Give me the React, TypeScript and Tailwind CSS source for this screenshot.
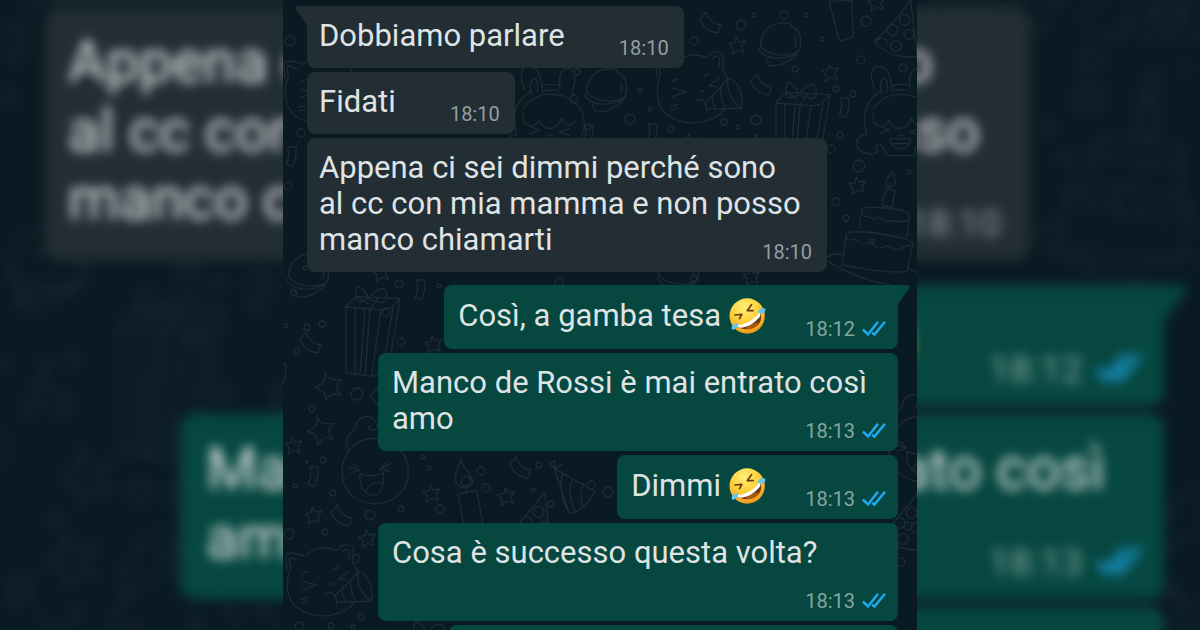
import clsx from 'clsx';

type Message = {
  id: number;
  from: 'them' | 'me';
  text: string;
  time: string;
  laugh?: boolean;
  tail?: boolean;
};

const messages: Message[] = [
  { id: 1, from: 'them', text: 'Dobbiamo parlare', time: '18:10', tail: true },
  { id: 2, from: 'them', text: 'Fidati', time: '18:10' },
  { id: 3, from: 'them', text: 'Appena ci sei dimmi perché sono al cc con mia mamma e non posso manco chiamarti', time: '18:10' },
  { id: 4, from: 'me', text: 'Così, a gamba tesa', time: '18:12', laugh: true, tail: true },
  { id: 5, from: 'me', text: 'Manco de Rossi è mai entrato così amo', time: '18:13' },
  { id: 6, from: 'me', text: 'Dimmi', time: '18:13', laugh: true },
  { id: 7, from: 'me', text: 'Cosa è successo questa volta?', time: '18:13' },
];

/* Wallpaper doodles, each drawn on a 3x grid */

const shapes = {
  cat: 'M10 82C5 55 3 35 12 32C25 28 50 35 65 40M20 75C14 55 15 45 22 45L42 52M65 40C90 12 120 10 160 22C170 5 195 2 205 10C212 25 208 40 205 55L220 85M175 25C185 15 195 18 197 28L195 50M20 75C5 110 8 150 22 175C50 215 110 225 150 215C180 208 200 195 210 180M55 115L98 125L55 140M195 85L165 108L188 110M55 95q10-10 20-8M150 78q12-2 16-8M138 123h10M50 170l20-7M52 180l20-6M150 162L225 85C250 90 270 130 262 175L158 178M225 85C215 100 225 150 262 175M200 110C198 130 205 160 215 176M175 135C172 150 180 165 185 176M128 150C145 145 160 155 158 188',
  gift: 'M3 60V258L80 268L108 68ZM3 58L35 28L165 35L135 65L108 68M165 38L130 250L80 268M30 62V260M60 66L45 263M75 66L60 265M145 58L112 256M70 30C50-5 35-5 35 5C30 25 35 45 45 45L70 35ZM75 30C95 5 115 0 122 12C128 30 125 45 110 48L75 38M35 28L70 50M100 32L75 66',
  cake: 'M198 5C178 25 170 45 185 50C208 50 210 30 198 5M190 40L186 58M178 57L165 105L195 112L205 62ZM97 170L105 118C110 105 240 115 248 135L240 200M105 130C115 150 125 130 140 150C155 130 165 155 180 155C200 145 215 165 245 150M45 285L58 195C60 170 250 200 258 220L240 305C180 310 90 295 45 285M55 200C65 225 75 195 95 215C110 235 125 205 140 225C160 250 175 215 195 235C215 250 230 225 255 225M0 262C10 252 30 250 45 256M5 275C60 310 150 345 230 350M245 295L290 320',
  bunny: 'M60 75C40 30 50 0 75 5C105 8 110 50 112 82M80 85C70 55 80 40 92 42C100 50 98 70 97 80M165 70C160 30 170 10 190 10C215 15 215 45 200 85M113 62C130 57 150 57 165 62M115 78C130 74 150 74 163 78M55 130C90 75 180 75 220 125M35 205C20 150 30 110 75 80M55 145C50 190 90 195 102 165C115 200 155 200 170 160C180 185 200 185 215 165M65 180l38 15l-30 12M195 190l-30 12l30 10M105 222h62C165 262 110 262 105 222M108 236h56M130 213q8-8 15 0M35 210C0 210-5 250 20 260C40 270 60 270 70 260C50 235 80 220 95 272H180C175 240 200 235 210 260M225 130C245 160 240 200 225 225',
  bell: 'M95 5C40-5 5 25 5 70C20 100 90 110 122 85C130 50 120 15 97 15ZM5 75C-5 80 5 95 25 103C60 117 120 100 120 82M22 108L30 130C60 138 90 120 115 97M108 45q6 15 0 30',
  star: 'M22 0L30 15L50 12L38 28L46 46L26 40L10 52L12 32L0 20L18 17Z',
  bigStar: 'M30 0C38 22 44 26 80 22C60 42 60 46 78 70C55 62 48 64 32 86C32 62 26 54 0 46C24 38 32 30 30 0Z',
  streamer: 'M18 0C10 10 5 18 0 22C8 45 35 65 55 62L62 38C45 38 25 25 18 0Z',
  ribbon: 'M5 0H30C32 20 28 40 20 58L0 52C8 38 10 18 5 0Z',
  laugh: 'M102 65C50 60 3 105 3 165C3 225 50 260 102 260C160 260 202 220 202 165C202 110 160 70 102 65M22 100C5 70 25 50 42 35C48 0 75-10 95 5C115 20 110 42 95 40C85 38 80 30 88 25M25 150l30 10l-25 8M35 140l20 18M150 140l-35 18l30 5M140 132l-20 22M57 170C80 180 105 178 127 168C132 215 115 235 92 235C70 230 55 215 57 170M75 225C75 205 110 190 122 200',
  candle: 'M20 0C10 25-5 60 12 75C25 88 45 85 55 70C60 45 25 25 20 0M20 65C20 45 50 42 50 65C45 82 22 82 20 65M35 82l5 15M12 102L68 92L88 200M12 102L30 200',
  hat: 'M10 20L55 155C85 150 120 120 132 88ZM-5 5L10 20L12-5ZM10 20L35 5M35 35C25 65 30 110 55 155M65 50C50 85 60 115 70 145M98 65C85 95 90 115 95 130',
  slice: 'M110 0C80 40 40 90 0 125C40 165 80 175 130 170L110 0ZM40 130a16 16 0 1 0-32 0M72 90a16 16 0 1 0-32 0a16 16 0 1 0 32 0M108 60a16 16 0 1 0-32 0a16 16 0 1 0 32 0M120 103a15 15 0 1 0-30 0a15 15 0 1 0 30 0M82 138a16 16 0 1 0-32 0a16 16 0 1 0 32 0',
  stick: 'M0 5L68 0L73 110L40 122L30 118Z',
};

const doodles: [keyof typeof shapes, number, number][] = [
  ['cat', 371, 50], ['cat', 1, 543], ['cat', -1, 51],
  ['gift', 492, 83], ['gift', 62, 287], ['gift', 120, 622],
  ['cake', 544, 170], ['bunny', 572, 65], ['bunny', 222, 65],
  ['bell', 476, 22], ['bell', 302, 68], ['bell', 4, 253],
  ['slice', 591, 0], ['slice', 225, 492], ['slice', 598, 493],
  ['stick', 546, 0], ['laugh', 58, 417], ['candle', 171, 460], ['hat', 268, 462],
  ['bigStar', 32, 372], ['bigStar', 24, 416],
  ['star', 446, 37], ['star', 539, 64], ['star', 566, 177], ['star', 142, 336],
  ['star', 2, 437], ['star', 22, 507], ['star', 76, 530], ['star', 140, 485],
  ['star', 215, 488], ['star', 585, -6], ['star', 460, 268], ['star', 90, 264],
  ['star', 398, 134], ['star', 465, 134],
  ['streamer', 417, 12], ['streamer', 17, 332], ['streamer', 227, 457],
  ['streamer', 48, 505], ['streamer', 468, 74], ['streamer', 88, 388],
  ['ribbon', 556, 98], ['ribbon', 364, 124], ['ribbon', 132, 280],
  ['ribbon', 25, 467], ['ribbon', 3, 147], ['ribbon', -7, 364], ['ribbon', 300, 125],
  ['laugh', 605, 395], ['bell', 374, 251],
];

const bubbles: [number, number, number][] = [
  [458, 25, 5], [501, 15, 4], [583, 21, 5], [578, 60, 4], [620, 68, 4], [411, 41, 4],
  [471, 15, 2], [523, 15, 2], [539, 39, 2], [512, 69, 3], [553, 89, 3], [570, 94, 3],
  [347, 119, 5], [473, 120, 5], [388, 129, 3], [441, 122, 3], [455, 127, 2], [367, 109, 2],
  [357, 90, 2], [557, 135, 3], [548, 149, 4], [576, 166, 6], [626, 172, 2], [553, 202, 4],
  [563, 218, 3], [589, 241, 2], [7, 41, 5], [294, 72, 3], [291, 99, 4], [305, 127, 3],
  [18, 133, 4], [5, 186, 4], [22, 268, 2], [11, 293, 3], [24, 327, 3], [39, 324, 3],
  [3, 326, 2], [103, 312, 4], [118, 342, 4], [14, 351, 3], [74, 394, 6], [29, 409, 3],
  [40, 460, 3], [24, 462, 1], [12, 486, 2], [50, 493, 3], [118, 509, 3], [87, 515, 5],
  [157, 509, 4], [198, 471, 4], [203, 488, 4], [146, 468, 2], [140, 457, 2], [42, 532, 3],
  [6, 534, 5], [73, 559, 4], [78, 617, 3], [48, 626, 3], [16, 626, 4], [256, 465, 3],
  [250, 490, 2], [308, 485, 4], [268, 504, 3], [325, 492, 5], [116, 284, 4], [411, 279, 3],
  [276, 282, 4], [156, 286, 2], [625, 526, 4], [618, 562, 4], [70, 627, 2],
];

const Wallpaper = () => (
  <svg
    className="absolute left-0 top-0 h-[630px] w-[634px] stroke-[#1d2c34]"
    viewBox="0 0 634 630"
    fill="none"
    strokeLinecap="round"
    strokeLinejoin="round"
    aria-hidden="true"
  >
    {doodles.map(([name, x, y]) => (
      <path key={`${name}-${x}-${y}`} d={shapes[name]} strokeWidth="4" transform={`translate(${x} ${y}) scale(0.333)`} />
    ))}
    {bubbles.map(([x, y, r]) => (
      <circle key={`${x}-${y}`} cx={x} cy={y} r={r} strokeWidth="1.3" />
    ))}
  </svg>
);

const LaughEmoji = ({ id }: { id: string }) => (
  <svg className="ml-2 inline-block h-9 w-[37px] align-[-8px]" viewBox="0 0 110 108" role="img" aria-label="🤣">
    <defs>
      <radialGradient id={`face-${id}`} cx="0.42" cy="0.25" r="0.8">
        <stop offset="0" stopColor="#fff07a" />
        <stop offset="0.5" stopColor="#fdd03c" />
        <stop offset="0.85" stopColor="#f5a623" />
        <stop offset="1" stopColor="#e58a17" />
      </radialGradient>
    </defs>
    <circle cx="54" cy="54" r="53" fill={`url(#face-${id})`} />
    <path d="M26 84C52 82 76 68 93 45C101 62 92 82 74 89C56 96 36 95 26 84Z" fill="#6e3a0b" />
    <path d="M48 92C56 80 76 72 90 76C80 90 64 95 48 92Z" fill="#a85a12" />
    <path d="M23 82C50 80 74 66 91 43C94 47 94 52 92 56C76 76 54 88 34 89C28 88 25 86 23 82Z" fill="#fff" />
    <path d="M17 51L38 49L31 62M67 20L54 38L72 38" fill="none" stroke="#6e3a0b" strokeWidth="5" strokeLinecap="round" strokeLinejoin="round" />
    <path d="M86 43C88 31 100 29 108 32C112 44 99 52 86 43Z" fill="#5fc6f2" />
    <path d="M26 75C29 84 22 95 9 95C4 86 12 76 26 75Z" fill="#5fc6f2" />
  </svg>
);

const ReadTicks = () => (
  <svg className="h-4 w-6" viewBox="0 0 24 16" fill="none" stroke="#1fa9ee" strokeWidth="2.5" role="img" aria-label="Letto">
    <path d="M0.900 8.500L6 13.500L16 0.800M10 11.800L12.400 13.500L23 0.800" />
  </svg>
);

const Tail = ({ mine }: { mine: boolean }) => (
  <svg
    className={clsx('absolute top-0 h-5 w-4', mine ? '-right-3 text-[#064740]' : '-left-3 -scale-x-100 text-[#222d34]')}
    viewBox="0 0 16 20"
    fill="currentColor"
    aria-hidden="true"
  >
    <path d="M0 0H14Q16.500 0.500 15.500 3L4 19V20H0Z" />
  </svg>
);

const Bubble = ({ message, scope }: { message: Message; scope: string }) => {
  const mine = message.from === 'me';
  return (
    <li
      className={clsx(
        'relative w-fit max-w-[520px] rounded-lg pb-3.5 pt-3 text-[31px]',
        mine ? 'self-end bg-[#064740] px-3.5' : 'self-start bg-[#222d34] pl-3 pr-[23px]',
        message.laugh ? 'leading-[38px]' : 'leading-9',
        message.tail && (mine ? 'mt-[9px] rounded-tr-none' : 'rounded-tl-none'),
      )}
    >
      {message.tail && <Tail mine={mine} />}
      <p className="text-[#dfe3e4]">
        {message.text}
        {message.laugh && <LaughEmoji id={`${scope}-${message.id}`} />}
        {/* keeps the last line clear of the time */}
        <span className={clsx('inline-block h-1', mine ? 'w-[118px]' : 'w-24')} />
      </p>
      <div
        className={clsx(
          'absolute bottom-2.5 flex items-center gap-[7px] text-xl leading-5',
          mine ? 'right-3 text-[#86a5a1]' : 'right-[15px] text-[#959da2]',
        )}
      >
        <time>{message.time}</time>
        {mine && <ReadTicks />}
      </div>
    </li>
  );
};

const Chat = ({ scope }: { scope: string }) => (
  <div className="relative h-full overflow-hidden bg-[#0a1a22]">
    <Wallpaper />
    <ol className="relative flex flex-col gap-1 pl-6 pr-[19px] pt-1.5">
      {messages.map((message) => (
        <Bubble key={message.id} message={message} scope={scope} />
      ))}
      <li className="h-16 w-[449px] max-w-full self-end rounded-lg bg-[#064740]" />
    </ol>
  </div>
);

export default function App() {
  return (
    <main className="relative h-screen overflow-hidden bg-[#0a1a22] font-[Roboto,sans-serif]">
      {/* enlarged, blurred copy of the chat behind the panel */}
      <div className="absolute inset-0 flex justify-center blur-[6px]" aria-hidden="true">
        <div className="h-full w-[634px] shrink-0 origin-[50%_285px] scale-[1.893]">
          <Chat scope="back" />
        </div>
      </div>
      <section className="relative mx-auto h-full w-full max-w-[634px]" aria-label="Chat">
        <Chat scope="front" />
      </section>
    </main>
  );
}
